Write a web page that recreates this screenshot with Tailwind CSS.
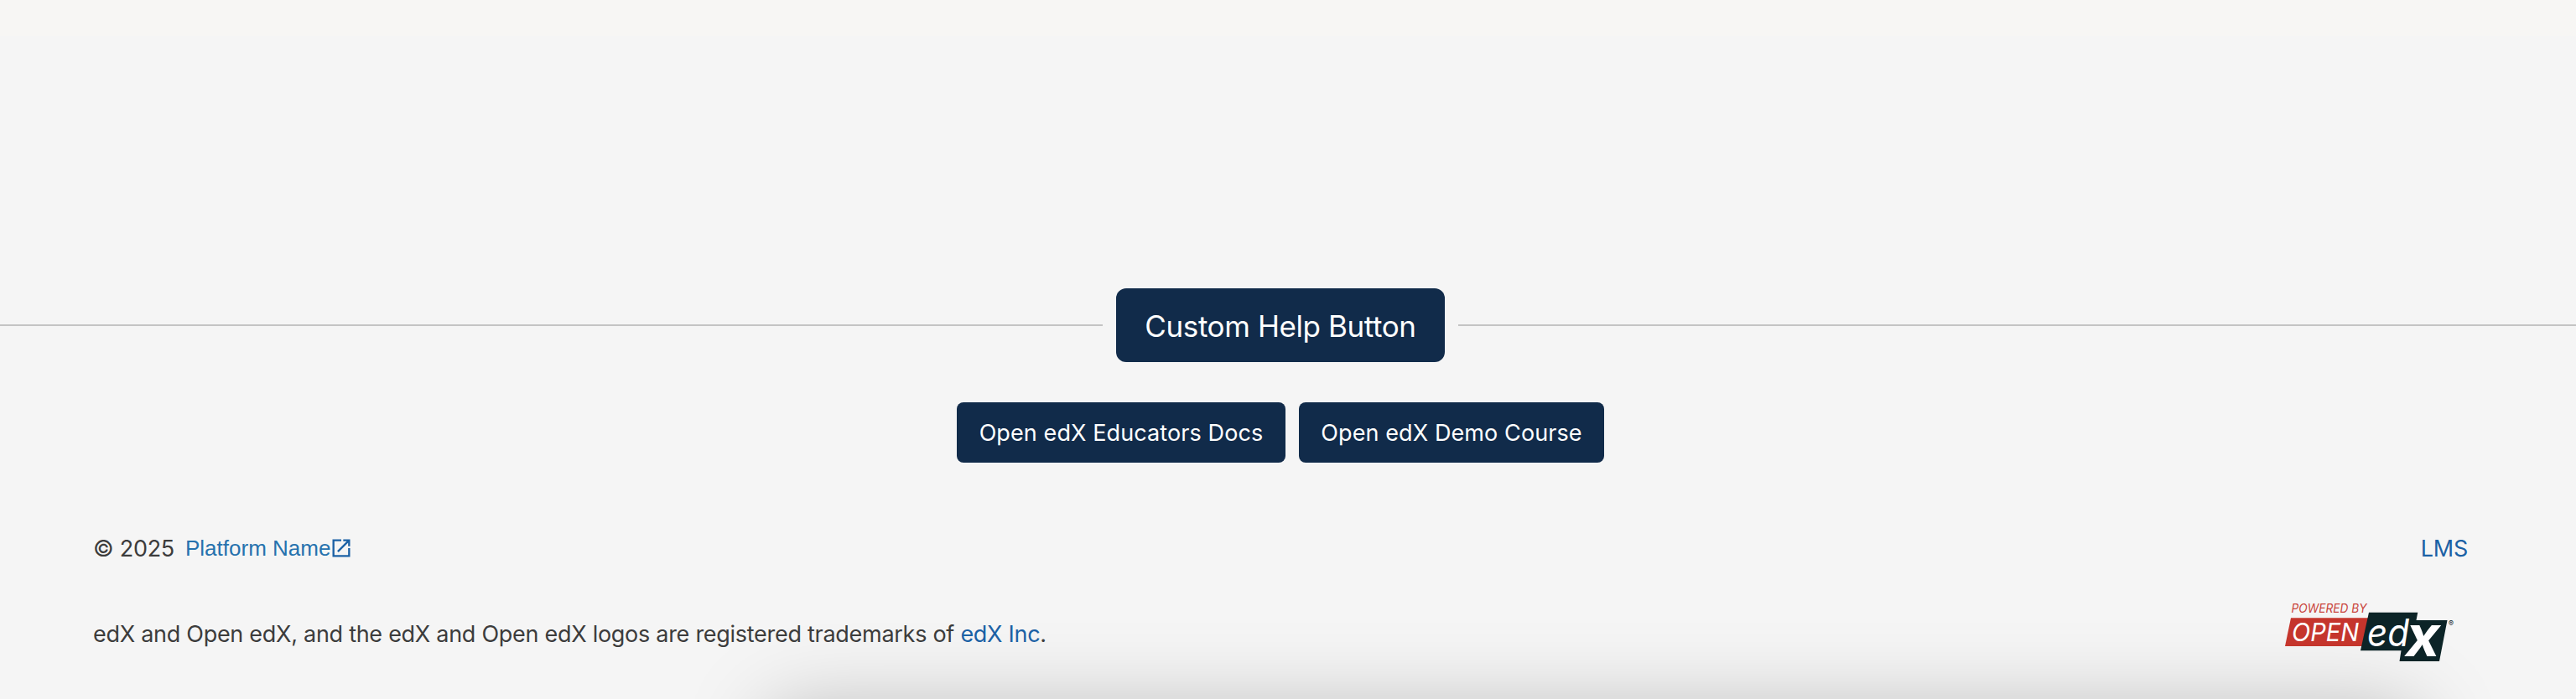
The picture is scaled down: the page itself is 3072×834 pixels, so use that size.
<!DOCTYPE html>
<html lang="en">
<head>
<meta charset="utf-8">
<title>Studio footer</title>
<script src="https://cdn.jsdelivr.net/npm/@tailwindcss/browser@4"></script>
</head>
<body>
<div class="relative h-[834px] w-[3072px] overflow-hidden bg-[#f5f5f5] font-['Inter',sans-serif] text-[27px] leading-[48px] text-[#3c3c3c]">
<div class="h-[43px] bg-[#f7f6f4]"></div>
<div class="mt-[301px] flex items-center gap-4">
  <div class="h-[2px] w-[1315px] bg-[#c4c4c4]"></div>
  <button class="h-[88px] w-[392px] whitespace-nowrap rounded-[12px] bg-[#112b4a] pt-0.5 text-[35px] tracking-[-0.4px] text-white">Custom Help Button</button>
  <div class="h-[2px] flex-1 bg-[#c4c4c4]"></div>
</div>
<div class="mt-12 ml-[1141px] flex gap-4 tracking-[0.1px] text-white">
  <button class="h-[72px] w-[392px] whitespace-nowrap rounded-lg bg-[#112b4a] pt-px">Open edX Educators Docs</button>
  <button class="h-[72px] w-[364px] whitespace-nowrap rounded-lg bg-[#112b4a] pt-px">Open edX Demo Course</button>
</div>
<footer class="relative z-10 pr-[129px] pl-[111px] tracking-[-0.28px]">
  <div class="mt-[78px] flex h-12 items-center">
    <span class="w-[97px] whitespace-nowrap pt-0.5">© 2025</span>
    <a class="ml-[13px] flex items-center font-['Liberation_Sans',sans-serif] text-[26px] tracking-normal text-[#2672ae]"><span>Platform Name</span>
      <svg class="-ml-px h-7 w-7" viewBox="0 0 24 24" fill="#1b61a5"><path d="M19 19H5V5h7V3H3v18h18v-9h-2v7ZM14 3v2h3.590l-9.830 9.830 1.410 1.410L19 6.410V10h2V3h-7Z"/></svg>
    </a>
    <a class="ml-auto pt-0.5 text-[#1b61a5]">LMS</a>
  </div>
  <div class="mt-[34px] flex items-start">
    <p class="mt-[21px] whitespace-nowrap">edX and Open edX, and the edX and Open edX logos are registered trademarks of <a class="text-[#1b61a5]">edX Inc</a>.</p>
    <svg class="mr-[12px] ml-auto h-[78px] w-[206px] overflow-visible" viewBox="0 0 206 78" font-family="Inter, sans-serif" font-style="italic" letter-spacing="0">
      <text x="7.500" y="19" font-size="14.500" fill="#c9443b" textLength="90" lengthAdjust="spacingAndGlyphs">POWERED BY</text>
      <path fill="#c5352c" d="M7 25.300h93l-5 33.700H0z"/>
      <path fill="#0c2427" d="M100 18.700h58.300l-1.800 9.300H193.500l-9.500 49H136.500l2-12.700H90z"/>
      <text x="8" y="53" font-size="30" fill="#fff" textLength="80" lengthAdjust="spacingAndGlyphs">OPEN</text>
      <text x="98" y="58.500" font-size="45" fill="#fff" textLength="50" lengthAdjust="spacingAndGlyphs">ed</text>
      <text x="144" y="71" font-size="67" font-weight="700" fill="#fff" textLength="41" lengthAdjust="spacingAndGlyphs">x</text>
      <text x="195" y="35" font-size="9" font-style="normal" fill="#0c2427">®</text>
    </svg>
  </div>
</footer>
<div class="absolute top-[848px] left-[918px] h-[200px] w-[1964px] rounded-[20px] shadow-[0_0_100px_rgba(0,0,0,0.25)]"></div>
</div>
</body>
</html>
